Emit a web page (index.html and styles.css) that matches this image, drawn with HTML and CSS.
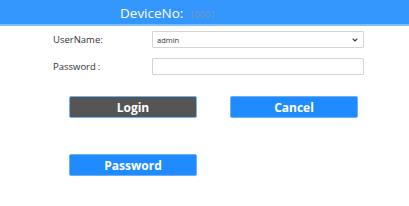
FILE: index.html
```html
<!DOCTYPE html>
<html lang="en">
<head>
  <meta charset="UTF-8">
  <title>Login</title>
  <link rel="stylesheet" href="styles.css">
</head>
<body>
  <div class="header">
    <span class="device-label">DeviceNo:</span>
    <span class="device-no">10001</span>
  </div>
  <div class="form">
    <div class="row">
      <label class="label">UserName:</label>
      <div class="select-wrap">
        <select class="field select">
          <option>admin</option>
        </select>
        <svg class="chevron" width="6" height="4" viewBox="0 0 6 4">
          <path d="M0.7 0.7 L3 3 L5.3 0.7" fill="none" stroke="#333" stroke-width="1.2"/>
        </svg>
      </div>
    </div>
    <div class="row">
      <label class="label">Password<span class="colon">:</span></label>
      <input class="field" type="password">
    </div>
  </div>
  <div class="actions">
    <button class="btn btn-login">Login</button>
    <button class="btn">Cancel</button>
  </div>
  <div class="actions actions-pwd">
    <button class="btn">Password</button>
  </div>
</body>
</html>
```

FILE: styles.css
```css
body {
  margin: 0;
  background: #fff;
  font-family: "Open Sans", "Noto Sans", sans-serif;
}
.header {
  height: 24px;
  background-color: #3396fc;
  border-bottom: 2px solid #7fbdfb;
  padding-left: 120px;
  display: flex;
  align-items: center;
}
.device-label {
  color: #fff;
  font-size: 13.5px;
  line-height: 24px;
  margin-top: 2px;
}
.device-no {
  color: #7a98bd;
  font-size: 9px;
  margin-left: 6px;
  margin-top: 4px;
}
.form {
  padding: 5px 0 0 53px;
}
.row {
  display: flex;
  align-items: center;
  margin-bottom: 10px;
}
.label {
  width: 99px;
  font-size: 9.5px;
  color: #333;
}
.colon {
  margin-left: 2px;
}
.select-wrap {
  position: relative;
  display: flex;
}
.field {
  width: 212px;
  height: 17px;
  box-sizing: border-box;
  border: 1px solid #d4d4d4;
  border-radius: 1px;
  background: #fff;
  font-family: "Open Sans", sans-serif;
  font-size: 7.5px;
  padding: 0 4px;
  margin: 0;
  outline: none;
}
.select {
  color: #333;
  appearance: none;
  -webkit-appearance: none;
}
.chevron {
  position: absolute;
  right: 6px;
  top: 7px;
}
.actions {
  display: flex;
  gap: 33px;
  padding: 11px 0 0 69px;
}
.actions-pwd {
  padding-top: 36px;
}
.btn {
  width: 128px;
  height: 22px;
  border: 1px solid #6db1f3;
  border-radius: 2px;
  background-color: #1f8bff;
  color: #fff;
  font-family: "Open Sans", sans-serif;
  font-weight: bold;
  font-size: 12px;
  padding: 0;
}
.btn-login {
  background-color: #555;
}
```
